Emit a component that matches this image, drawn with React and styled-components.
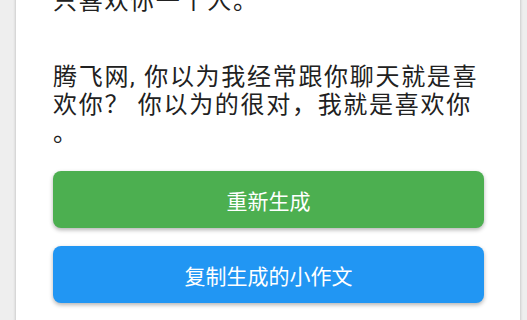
import React from "react";
import styled, { createGlobalStyle } from "styled-components";

const GlobalStyle = createGlobalStyle`
  html, body {
    margin: 0;
    padding: 0;
    background: #eeeeee;
    overflow: hidden;
  }
  body {
    font-family: "Roboto", "Noto Sans CJK SC", sans-serif;
  }
`;

const Page = styled.div`
  width: 527px;
  height: 320px;
  overflow: hidden;
`;

const Card = styled.div`
  width: 504px;
  margin: -13px 0 0 16px;
  padding: 0 36px 40px 37px;
  box-sizing: border-box;
  background: #ffffff;
  box-shadow: 0 0 3px rgba(0, 0, 0, 0.25);
`;

const Paragraph = styled.p`
  margin: 0 0 ${(p) => p.$gap}px;
  font-size: 24px;
  line-height: 28px;
  letter-spacing: 1.7px;
  color: #212121;
  line-break: anywhere;
`;

const Actions = styled.div`
  display: flex;
  flex-direction: column;
  gap: 18px;
`;

const Button = styled.button`
  height: 57px;
  border: none;
  border-radius: 8px;
  background: ${(p) => p.$color};
  color: #ffffff;
  font-family: inherit;
  font-size: 21px;
  box-shadow: 0 2px 4px rgba(0, 0, 0, 0.3);
  cursor: pointer;
`;

export default function App() {
  return (
    <Page>
      <GlobalStyle />
      <Card>
        <Paragraph $gap={48}>只喜欢你一个人。</Paragraph>
        <Paragraph $gap={24}>
          腾飞网, 你以为我经常跟你聊天就是喜欢你？ 你以为的很对，我就是喜欢你。
        </Paragraph>
        <Actions>
          <Button $color="#4caf50">重新生成</Button>
          <Button $color="#2196f3">复制生成的小作文</Button>
        </Actions>
      </Card>
    </Page>
  );
}
